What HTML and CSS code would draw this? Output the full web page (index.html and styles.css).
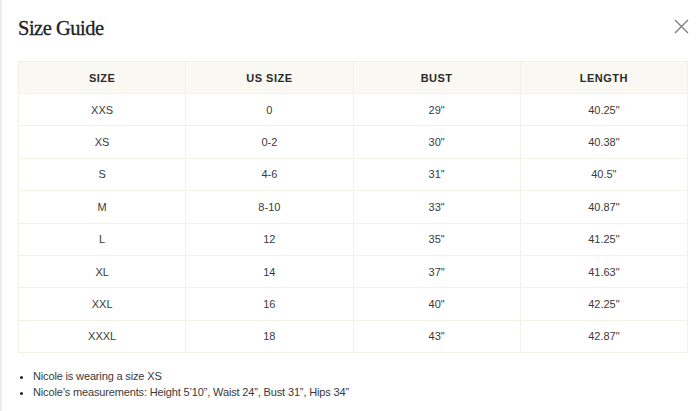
FILE: index.html
```html
<!DOCTYPE html>
<html lang="en">
<head>
<meta charset="utf-8">
<title>Size Guide</title>
<link rel="stylesheet" href="styles.css">
</head>
<body>
<div class="modal">
  <header class="modal-head">
    <h1 class="title">Size Guide</h1>
    <button class="close" aria-label="Close">
      <svg width="15" height="15" viewBox="0 0 15 15"><path d="M1 1L14 14M14 1L1 14" stroke="#7a7a7a" stroke-width="1.2" fill="none"/></svg>
    </button>
  </header>
  <table class="sizes">
    <thead>
      <tr><th>SIZE</th><th>US SIZE</th><th>BUST</th><th>LENGTH</th></tr>
    </thead>
    <tbody>
      <tr><td>XXS</td><td>0</td><td>29"</td><td>40.25"</td></tr>
      <tr><td>XS</td><td>0-2</td><td>30"</td><td>40.38"</td></tr>
      <tr><td>S</td><td>4-6</td><td>31"</td><td>40.5"</td></tr>
      <tr><td>M</td><td>8-10</td><td>33"</td><td>40.87"</td></tr>
      <tr><td>L</td><td>12</td><td>35"</td><td>41.25"</td></tr>
      <tr><td>XL</td><td>14</td><td>37"</td><td>41.63"</td></tr>
      <tr><td>XXL</td><td>16</td><td>40"</td><td>42.25"</td></tr>
      <tr><td>XXXL</td><td>18</td><td>43"</td><td>42.87"</td></tr>
    </tbody>
  </table>
  <ul class="notes">
    <li>Nicole is wearing a size XS</li>
    <li>Nicole’s measurements: Height 5’10”, Waist 24”, Bust 31”, Hips 34”</li>
  </ul>
</div>
</body>
</html>
```
FILE: styles.css
```css
html, body {
  margin: 0;
  padding: 0;
  background: #fff;
}
body {
  border-left: 2px solid #ececec;
  height: 411px;
  box-sizing: border-box;
  font-family: "Liberation Sans", Arial, sans-serif;
  color: #333;
}
.modal {
  padding: 16px 12px 0 16px;
}
.modal-head {
  display: flex;
  justify-content: space-between;
  align-items: flex-start;
  height: 45px;
}
.title {
  margin: 0;
  padding-top: 1px;
  font-family: "Liberation Serif", "Times New Roman", serif;
  font-weight: normal;
  font-size: 20.5px;
  letter-spacing: -0.5px;
  color: #222;
  -webkit-text-stroke: 0.3px #222;
}
.close {
  border: 0;
  background: none;
  padding: 0;
  margin: 3px -1px 0 0;
  width: 15px;
  height: 15px;
  display: flex;
}
.sizes {
  width: 670px;
  border-collapse: collapse;
  table-layout: fixed;
  font-size: 11px;
  text-align: center;
}
.sizes th, .sizes td {
  border: 1px solid #f3f0e4;
  height: 31.4px;
  padding: 0;
}
.sizes th {
  background: #faf8f2;
  font-weight: bold;
  letter-spacing: 0.5px;
  color: #2a2a2a;
  height: 31px;
}
.sizes td {
  color: #3a3a3a;
}
.notes {
  margin: 15px 0 0;
  padding: 0 0 0 15px;
  font-size: 11px;
  letter-spacing: -0.15px;
  line-height: 16px;
  color: #3a3a3a;
}
.notes li::marker {
  font-size: 11px;
  color: #222;
}
```
